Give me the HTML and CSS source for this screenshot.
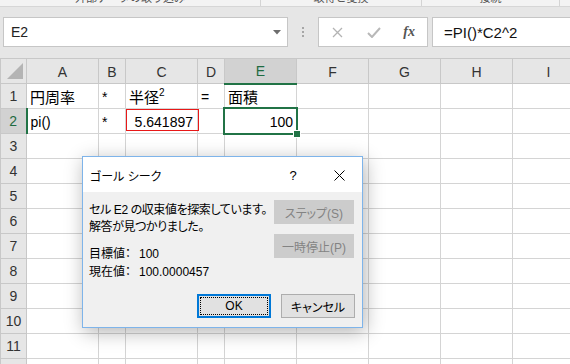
FILE: index.html
```html
<!DOCTYPE html>
<html lang="ja">
<head>
  <meta charset="UTF-8">
  <title>ゴール シーク</title>
  <link rel="stylesheet" href="styles.css">
</head>
<body>
  <div class="ribbon">
    <div class="group g1"><span>外部データの取り込み</span></div>
    <div class="group g2"><span>取得と変換</span></div>
    <div class="group g3"><span>接続</span></div>
  </div>

  <div class="formula-bar">
    <div class="name-box">
      <span>E2</span>
      <svg class="dropdown" width="8" height="5" viewBox="0 0 8 5"><polygon points="0,0 8,0 4,4.5" fill="#6d6d6d"/></svg>
    </div>
    <div class="grip"><i></i><i></i><i></i></div>
    <div class="fx-buttons">
      <span class="slot">
        <svg width="11" height="11" viewBox="0 0 11 11"><path d="M1 1 L10 10 M10 1 L1 10" stroke="#b3b3b3" stroke-width="1.3" fill="none"/></svg>
      </span>
      <span class="slot">
        <svg width="14" height="11" viewBox="0 0 14 11"><path d="M1 6 L5 10 L13 1" stroke="#b8b8b8" stroke-width="2" fill="none"/></svg>
      </span>
      <span class="slot fx">fx</span>
    </div>
    <div class="formula">=PI()*C2^2</div>
  </div>

  <table class="sheet">
    <colgroup>
      <col class="c-head"><col class="c-wide"><col class="c-narrow"><col class="c-wide"><col class="c-narrow">
      <col class="c-wide"><col class="c-wide"><col class="c-wide"><col class="c-wide"><col class="c-wide">
    </colgroup>
    <tr class="col-heads">
      <th class="corner"><svg width="17" height="17" viewBox="0 0 17 17"><polygon points="16,0 16,16 0,16" fill="#b4b4b4"/></svg></th>
      <th>A</th><th>B</th><th>C</th><th>D</th><th class="sel">E</th><th>F</th><th>G</th><th>H</th><th>I</th>
    </tr>
    <tr>
      <th>1</th>
      <td><span class="ja">円周率</span></td>
      <td class="sym">*</td>
      <td><span class="ja">半径</span><sup>2</sup></td>
      <td class="sym">=</td>
      <td><span class="ja">面積</span></td>
      <td></td><td></td><td></td><td></td>
    </tr>
    <tr>
      <th class="sel">2</th>
      <td>pi()</td>
      <td class="sym">*</td>
      <td class="num marked">5.641897</td>
      <td></td>
      <td class="num active">100</td>
      <td></td><td></td><td></td><td></td>
    </tr>
    <tr><th>3</th><td></td><td></td><td></td><td></td><td></td><td></td><td></td><td></td><td></td></tr>
    <tr><th>4</th><td></td><td></td><td></td><td></td><td></td><td></td><td></td><td></td><td></td></tr>
    <tr><th>5</th><td></td><td></td><td></td><td></td><td></td><td></td><td></td><td></td><td></td></tr>
    <tr><th>6</th><td></td><td></td><td></td><td></td><td></td><td></td><td></td><td></td><td></td></tr>
    <tr><th>7</th><td></td><td></td><td></td><td></td><td></td><td></td><td></td><td></td><td></td></tr>
    <tr><th>8</th><td></td><td></td><td></td><td></td><td></td><td></td><td></td><td></td><td></td></tr>
    <tr><th>9</th><td></td><td></td><td></td><td></td><td></td><td></td><td></td><td></td><td></td></tr>
    <tr><th>10</th><td></td><td></td><td></td><td></td><td></td><td></td><td></td><td></td><td></td></tr>
    <tr><th>11</th><td></td><td></td><td></td><td></td><td></td><td></td><td></td><td></td><td></td></tr>
    <tr><th>12</th><td></td><td></td><td></td><td></td><td></td><td></td><td></td><td></td><td></td></tr>
  </table>

  <div class="dialog">
    <div class="dlg-title">
      <span class="caption">ゴール シーク</span>
      <span class="help">?</span>
      <span class="close">
        <svg width="11" height="11" viewBox="0 0 11 11"><path d="M0.5 0.5 L10.5 10.5 M10.5 0.5 L0.5 10.5" stroke="#000" stroke-width="1" fill="none"/></svg>
      </span>
    </div>
    <div class="dlg-body">
      <div class="dlg-main">
        <div class="msg">
          <p>セル E2 の収束値を探索しています。</p>
          <p>解答が見つかりました。</p>
        </div>
        <div class="vals">
          <span>目標値：</span><span>100</span>
          <span>現在値：</span><span>100.0000457</span>
        </div>
      </div>
      <div class="dlg-side">
        <button class="btn" disabled>ステップ(S)</button>
        <button class="btn" disabled>一時停止(P)</button>
      </div>
    </div>
    <div class="dlg-foot">
      <button class="btn ok">OK</button>
      <button class="btn">キャンセル</button>
    </div>
  </div>
</body>
</html>
```

FILE: styles.css
```css
body {
  margin: 0;
  width: 570px;
  height: 364px;
  overflow: hidden;
  position: relative;
  background: #fff;
  font-family: "Liberation Sans", "Noto Sans CJK JP", sans-serif;
}

/* ribbon remnant at the very top */
.ribbon {
  height: 6px;
  overflow: hidden;
  display: flex;
  background: #f3f3f3;
  border-bottom: 1px solid #d6d6d6;
}

.group {
  height: 6px;
  display: flex;
  justify-content: center;
  border-right: 1px solid #d4d4d4;
  box-sizing: border-box;
}

.group span {
  font-size: 11px;
  line-height: 12px;
  margin-top: -8px;
  color: #555;
  white-space: nowrap;
}

.g1 { width: 261px; }
.g2 { width: 161px; }
.g3 { width: 138px; }

/* formula bar */
.formula-bar {
  display: flex;
  align-items: center;
  height: 51px;
  padding: 10px 0 11px 3px;
  box-sizing: border-box;
  background: #e6e6e6;
}

.name-box,
.fx-buttons,
.formula {
  height: 30px;
  box-sizing: border-box;
  background: #fff;
  border: 1px solid #c6c6c6;
  display: flex;
  align-items: center;
}

.name-box {
  width: 285px;
  padding: 0 6px 0 7px;
  font-size: 14px;
  color: #222;
}

.name-box span {
  flex: 1;
}

.grip {
  width: 2px;
  margin: 0 14px;
  display: flex;
  flex-direction: column;
  gap: 2px;
}

.grip i {
  width: 2px;
  height: 2px;
  background: #a6a6a6;
}

.fx-buttons {
  width: 110px;
  padding-left: 1px;
}

.slot {
  width: 36px;
  display: flex;
  justify-content: center;
  align-items: center;
}

.fx {
  font-family: "Liberation Serif", serif;
  font-style: italic;
  font-weight: bold;
  font-size: 14px;
  color: #555;
}

.formula {
  flex: 1;
  margin-left: 4px;
  margin-right: -3px;
  padding-left: 11px;
  font-size: 15px;
  color: #111;
}

/* grid */
.sheet {
  border-collapse: collapse;
  table-layout: fixed;
  width: 584px;
  font-size: 14px;
}

.c-head { width: 26px; }
.c-wide { width: 72px; }
.c-narrow { width: 27px; }

.sheet tr {
  height: 25px;
}

.sheet td,
.sheet th {
  border: 1px solid #d4d4d4;
  padding: 0 3px;
  white-space: nowrap;
  overflow: visible;
  line-height: 20px;
}

.sheet td {
  padding-top: 2px;
  color: #000;
}

.sheet th {
  background: #e6e6e6;
  border-color: #c8c8c8;
  font-weight: normal;
  color: #333;
  text-align: center;
  padding: 0;
}

.col-heads th {
  padding-top: 1px;
}

.sheet th.sel {
  background: #d2d2d2;
  color: #1e6b41;
}

.col-heads th.sel {
  border-bottom: 2px solid #217346;
}

tr th.sel:first-child {
  border-right: 2px solid #217346;
}

.corner {
  vertical-align: bottom;
  text-align: right;
}

.corner svg {
  display: block;
  margin: 0 2px 3px auto;
}

.ja {
  font-family: "Noto Sans CJK JP", sans-serif;
  font-size: 15px;
}

sup {
  font-size: 10px;
  vertical-align: 7px;
  line-height: 0;
}

.sym {
  padding-left: 5px;
}

.num {
  text-align: right;
}

.sheet td.marked {
  position: relative;
  padding-right: 4px;
}

.marked::after {
  content: "";
  position: absolute;
  left: 0;
  right: -2px;
  top: 0;
  bottom: 2px;
  border: 1px solid #e81818;
}

.sheet td.active {
  position: relative;
  padding-right: 3px;
}

.active::after {
  content: "";
  position: absolute;
  left: -2px;
  right: -2px;
  top: -2px;
  bottom: -2px;
  border: 2px solid #217346;
}

.active::before {
  content: "";
  position: absolute;
  right: -5px;
  bottom: -5px;
  width: 6px;
  height: 6px;
  background: #217346;
  border: 1px solid #fff;
  z-index: 1;
}

/* goal seek dialog */
.dialog {
  position: absolute;
  left: 82px;
  top: 156px;
  width: 281px;
  height: 172px;
  box-sizing: border-box;
  border: 1px solid #7eb4ea;
  background: #f0f0f0;
  box-shadow: 2px 4px 18px rgba(0, 0, 0, 0.3);
  display: flex;
  flex-direction: column;
  font-size: 12px;
  font-feature-settings: "palt";
  color: #000;
}

.dlg-title {
  height: 35px;
  background: #fff;
  display: flex;
  align-items: center;
  padding: 2px 0 0 7px;
  box-sizing: border-box;
}

.caption {
  flex: 1;
}

.help,
.close {
  width: 46px;
  display: flex;
  justify-content: center;
  align-items: center;
}

.help {
  font-size: 13px;
}

.dlg-body {
  display: flex;
  padding: 8px 8px 0 6px;
}

.dlg-main {
  flex: 1;
  min-width: 0;
  padding-top: 2px;
}

.msg p {
  margin: 0;
  line-height: 17px;
  white-space: nowrap;
  letter-spacing: -0.4px;
}

.vals {
  margin-top: 9px;
  display: grid;
  grid-template-columns: 50px auto;
  line-height: 18px;
}

.dlg-side {
  width: 80px;
  flex: none;
  display: flex;
  flex-direction: column;
  gap: 10px;
}

.btn {
  height: 24px;
  box-sizing: border-box;
  border: 1px solid #adadad;
  background: #e1e1e1;
  font: inherit;
  font-feature-settings: "palt";
  color: #000;
  padding: 0;
}

.btn:disabled {
  background: #cccccc;
  border-color: #cccccc;
  color: #838383;
}

.dlg-foot {
  margin-top: auto;
  display: flex;
  justify-content: flex-end;
  gap: 10px;
  padding: 0 7px 9px 0;
}

.dlg-foot .btn {
  width: 74px;
}

.btn.ok {
  border: 2px solid #0078d7;
  outline: 1px dotted #000;
  outline-offset: -4px;
}
```
